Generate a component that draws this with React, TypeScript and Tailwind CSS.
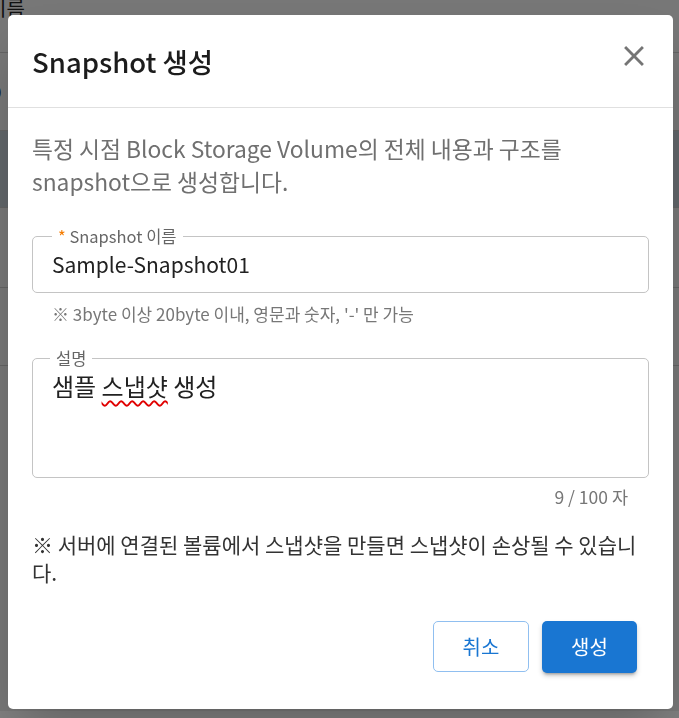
import React from 'react';

const font = { fontFamily: '"Noto Sans CJK KR", "Noto Sans", sans-serif' };

const BackgroundPage: React.FC = () => {
  return (
    <div className="min-h-[718px] bg-[#eeeeee] text-[20px] text-[#222]" style={font}>
      <div className="-ml-[12px] -mt-[7px]">
        <div className="h-[60px] border-b border-[#c8c8c8] leading-[30px]">이름</div>
        <div className="flex h-[78px] items-center border-b border-[#c8c8c8]">D</div>
        <div className="flex h-[77px] items-center border-b border-[#c8c8c8] bg-[#c2ccd3]">l</div>
        <div className="flex h-[80px] items-center border-b border-[#c8c8c8] underline">2</div>
        <div className="flex h-[78px] items-center border-b border-[#c8c8c8]"></div>
      </div>
    </div>
  );
};

const CloseIcon: React.FC = () => (
  <svg width="34" height="34" viewBox="0 0 24 24" fill="#757575">
    <path d="M19 6.41 17.59 5 12 10.59 6.41 5 5 6.41 10.59 12 5 17.59 6.41 19 12 13.41 17.59 19 19 17.59 13.41 12z" />
  </svg>
);

const SnapshotDialog: React.FC = () => {
  return (
    <div className="fixed inset-0 bg-black/50" style={font}>
      <div className="ml-[8px] mt-[15px] w-[665px] rounded-[5px] bg-white shadow-2xl">
        <div className="flex h-[93px] items-center justify-between border-b border-[#e0e0e0] pl-[24px] pr-[19px]">
          <h2 className="text-[27.5px] font-medium leading-[32px] text-[#1c1c1c]">Snapshot 생성</h2>
          <button className="-mt-[10px] flex h-[40px] w-[40px] items-center justify-center">
            <CloseIcon />
          </button>
        </div>

        <div className="px-[24px] pt-[24px] pb-[36px]">
          <p className="text-[22.8px] leading-[33px] text-[#707070]">
            특정 시점 Block Storage Volume의 전체 내용과 구조를
            <br />
            snapshot으로 생성합니다.
          </p>

          <div className="relative mt-[38px] h-[57px] rounded-[5px] border border-[#c4c4c4]">
            <label className="absolute -top-[11px] left-[19px] bg-white px-[6px] text-[16.5px] leading-[20px] text-[#666]">
              <span className="text-[#f57c00]">*</span> Snapshot 이름
            </label>
            <div className="flex h-full items-center pl-[19px] text-[21px] text-[#212121]">Sample-Snapshot01</div>
          </div>
          <p className="mt-[11px] pl-[20px] text-[17px] leading-[20px] text-[#777]">
            ※ 3byte 이상 20byte 이내, 영문과 숫자, '-' 만 가능
          </p>

          <div className="relative mt-[34px] h-[120px] rounded-[5px] border border-[#c4c4c4]">
            <label className="absolute -top-[11px] left-[17px] bg-white px-[6px] text-[16.5px] leading-[20px] text-[#666]">
              설명
            </label>
            <div className="pl-[19px] pt-[12px] text-[24px] leading-[30px] text-[#212121]">
              샘플 <span className="underline decoration-[#e00000] decoration-wavy decoration-[1.5px] underline-offset-[4px]">스냅샷</span> 생성
            </div>
          </div>
          <p className="mt-[9px] pr-[21px] text-right text-[17.5px] leading-[20px] text-[#777]">9 / 100 자</p>

          <p className="mt-[23px] text-[21px] leading-[28px] text-[#333]">
            ※ 서버에 연결된 볼륨에서 스냅샷을 만들면 스냅샷이 손상될 수 있습니다.
          </p>

          <div className="mt-[35px] flex justify-end gap-[13px] pr-[12px]">
            <button className="h-[51px] w-[96px] rounded-[5px] border border-[#90bff0] text-[20px] text-[#1976d2]">취소</button>
            <button className="h-[52px] w-[95px] rounded-[5px] bg-[#1976d2] text-[20px] text-white shadow-[0_3px_3px_-2px_rgba(0,0,0,0.3),0_3px_5px_0_rgba(0,0,0,0.18)]">생성</button>
          </div>
        </div>
      </div>
    </div>
  );
};

export default function App() {
  return (
    <div className="relative">
      <BackgroundPage />
      <SnapshotDialog />
    </div>
  );
}
